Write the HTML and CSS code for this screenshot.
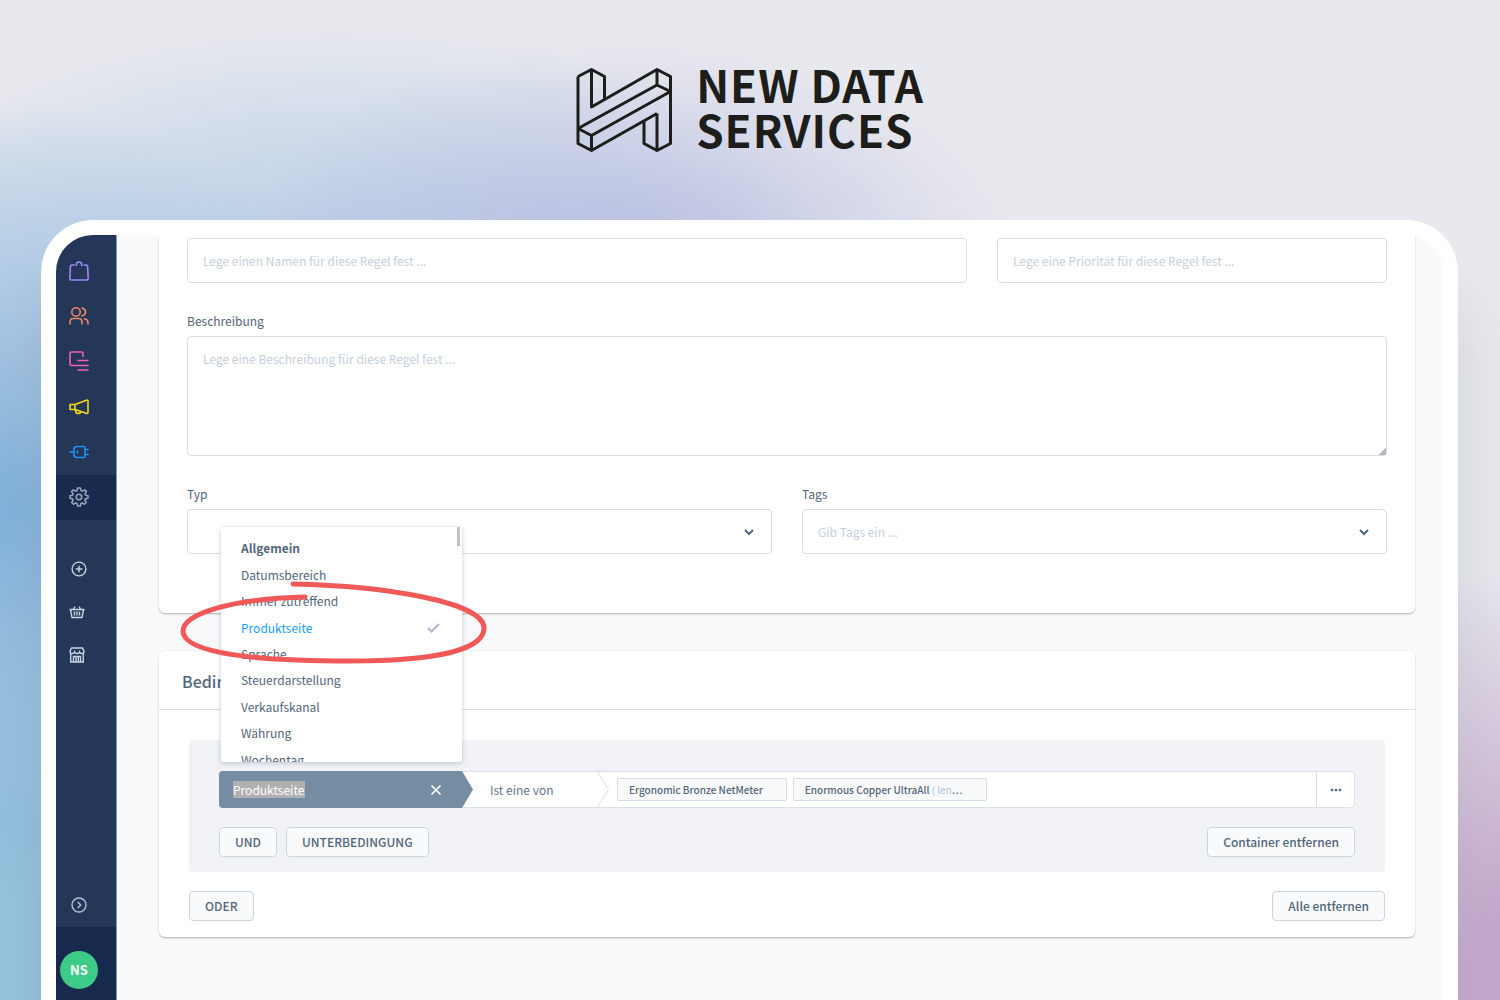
FILE: index.html
```html
<!DOCTYPE html>
<html lang="de">
<head>
<meta charset="utf-8">
<meta name="viewport" content="width=device-width, initial-scale=1">
<title>New Data Services</title>
<link rel="stylesheet" href="styles.css">
</head>
<body>
<header class="brand">
  <svg class="brand-mark" width="96" height="84" viewBox="0 0 96 84" aria-hidden="true">
    <path d="M2 8.500L15.500 1.500L28.500 8.500V31.500M15.500 1.500V39L81 1.500L94.500 8.500V75.500L81 82.500L68 75.500V53.500M2 8.500V75.500L15.500 82.500L81 45.500M94.500 23.500L81 17V1.500M81 17L2 60.500L15.500 67.500V82.500M15.500 67.500L94.500 23.500M81 82.500V45.500"/>
  </svg>
  <span class="brand-name">NEW DATA<br>SERVICES</span>
</header>
<div class="frame">
  <nav class="sidebar" aria-label="Hauptmenü">
    <div class="nav-main">
      <a href="#" class="nav-link violet" aria-label="Kataloge"><svg width="20" height="20" viewBox="0 0 20 20"><path d="M5 4H3Q1.500 4 1.400 5.500L0.800 17.500Q0.800 19 2.300 19H17.700Q19.200 19 19.200 17.500L18.600 5.500Q18.500 4 17 4H15M7.300 4.500V3.500Q7.300 1 10 1T12.700 3.500V4.500"/></svg></a>
      <a href="#" class="nav-link orange" aria-label="Kunden"><svg width="20" height="20" viewBox="0 0 20 20"><circle cx="7" cy="6" r="4.200"/><path d="M1 18V16Q1 12.500 4.500 12.500H9.500Q13 12.500 13 16V18M13 2Q16.500 3 16.500 6T13 10M15.500 12.700Q19 13.500 19 16.500V18"/></svg></a>
      <a href="#" class="nav-link pink" aria-label="Inhalte"><svg width="20" height="20" viewBox="0 0 20 20"><path d="M5.500 14.500H2.500Q1 14.500 1 13V2.500Q1 1 2.500 1H12.500Q14 1 14 2.500V5.500M9 9.500H19M6.500 14.500H19M9 19H19"/></svg></a>
      <a href="#" class="nav-link yellow" aria-label="Marketing"><svg width="20" height="20" viewBox="0 0 20 20"><path d="M1 7.500H6L18 3Q19 3 19 4V15.500Q19 16.500 18 16.500L6 12.500H1ZM6 7.500V12.500M6.500 13Q6.500 16.500 9 16.500T12 14.500"/></svg></a>
      <a href="#" class="nav-link blue" aria-label="Erweiterungen"><svg width="20" height="20" viewBox="0 0 20 20"><path d="M1 10H5M5 7Q5 4.500 8 4.500H14.500Q16 4.500 16 6V14Q16 15.500 14.500 15.500H8Q5 15.500 5 13ZM8.500 9V11M16 7.500H19M16 12.500H19"/></svg></a>
      <a href="#" class="nav-link active" aria-label="Einstellungen"><svg width="20" height="20" viewBox="0 0 20 20"><circle cx="10" cy="10" r="2.700"/><path d="M8.600 1H11.400L12 3.600L13.500 4.200L15.700 2.800L17.500 4.600L16 6.700L16.600 8.200L19 8.700V11.300L16.500 11.900L15.900 13.400L17.300 15.500L15.500 17.300L13.300 15.900L11.900 16.500L11.400 19H8.600L8 16.500L6.600 15.900L4.500 17.300L2.700 15.500L4 13.400L3.500 11.900L1 11.300V8.700L3.500 8.200L4 6.700L2.600 4.600L4.400 2.800L6.600 4.200L8 3.600Z"/></svg></a>
    </div>
    <div class="nav-extra">
      <a href="#" class="nav-small" aria-label="Hinzufügen"><svg width="16" height="16" viewBox="0 0 16 16"><circle cx="8" cy="8" r="6.900"/><path d="M8 4.700V11.300M4.700 8H11.300"/></svg></a>
      <a href="#" class="nav-small shop" aria-label="Warenkorb"><svg width="16" height="14" viewBox="0 0 16 14"><path d="M0.500 4.500H15.500M1.500 4.500L3 12.500H13L14.500 4.500M4.500 4L6 1.500M11.500 4L10 1.500M5.500 6.500V10.500M8 6.500V10.500M10.500 6.500V10.500"/></svg></a>
      <a href="#" class="nav-small shop" aria-label="Storefront"><svg width="16" height="16" viewBox="0 0 16 16"><path d="M2.500 1H13.500L15 4.500Q15 6.500 13 6.500T10.500 5Q10 6.500 8 6.500T5.500 5Q5 6.500 3 6.500T1 4.500ZM1.700 6.500V15H14.300V6.500M4.500 15V9.500H11.500V15M7 9.500V15M9.300 9.500V15"/></svg></a>
    </div>
    <button class="nav-toggle" type="button" aria-label="Menü ausklappen"><svg width="16" height="16" viewBox="0 0 16 16"><circle cx="8" cy="8" r="7"/><path d="M6.700 5L9.700 8L6.700 11"/></svg></button>
    <div class="nav-user"><span class="avatar">NS</span></div>
  </nav>
  <main class="content">
    <form class="card general">
      <div class="row name-row">
        <input class="field" type="text" aria-label="Name" placeholder="Lege einen Namen für diese Regel fest ...">
        <input class="field" type="text" aria-label="Priorität" placeholder="Lege eine Priorität für diese Regel fest ...">
      </div>
      <div class="group">
        <label for="description">Beschreibung</label>
        <textarea class="field area" id="description" placeholder="Lege eine Beschreibung für diese Regel fest ..."></textarea>
      </div>
      <div class="row half-row">
        <div class="group">
          <label for="type">Typ</label>
          <div class="select-box">
            <select class="field" id="type"><option></option></select>
            <svg class="chevron" width="10" height="6" viewBox="0 0 10 6" aria-hidden="true"><path d="M1 1L5 5L9 1"/></svg>
          </div>
        </div>
        <div class="group">
          <label for="tags">Tags</label>
          <div class="select-box">
            <input class="field" id="tags" type="text" placeholder="Gib Tags ein ...">
            <svg class="chevron" width="10" height="6" viewBox="0 0 10 6" aria-hidden="true"><path d="M1 1L5 5L9 1"/></svg>
          </div>
        </div>
      </div>
    </form>
    <section class="card conditions">
      <h2 class="card-title">Bedingungen</h2>
      <div class="card-body">
        <div class="container">
          <div class="condition">
            <div class="cond-type">
              <input class="cond-input" type="text" value="Produktseite" aria-label="Bedingung">
              <button class="clear" type="button" aria-label="Leeren"><svg width="10" height="10" viewBox="0 0 10 10"><path d="M0.500 0.500L9.500 9.500M9.500 0.500L0.500 9.500"/></svg></button>
              <svg class="cond-arrow" width="12" height="37" viewBox="0 0 12 37" aria-hidden="true"><path d="M0 0L11 18.500L0 37Z"/></svg>
              <div class="menu">
                <ul class="options">
                  <li class="heading">Allgemein</li>
                  <li>Datumsbereich</li>
                  <li>Immer zutreffend</li>
                  <li class="chosen">Produktseite<svg width="13" height="10" viewBox="0 0 13 10" aria-hidden="true"><path d="M1 5L4.500 8.500L12 1"/></svg></li>
                  <li>Sprache</li>
                  <li>Steuerdarstellung</li>
                  <li>Verkaufskanal</li>
                  <li>Währung</li>
                  <li>Wochentag</li>
                </ul>
                <span class="thumb"></span>
              </div>
              <svg class="marker" width="308" height="84" viewBox="0 0 308 84" aria-hidden="true"><path d="M113 5C205 7 304 23 304 49C304 72 250 82 170 82C80 82 3 75 3 52C3 35 50 20 125 18"/></svg>
            </div>
            <div class="cond-operator">Ist eine von</div>
            <svg class="divider" width="12" height="35" viewBox="0 0 12 35" aria-hidden="true"><path d="M0.500 0L11.500 17.500L0.500 35"/></svg>
            <div class="cond-values">
              <span class="chip">Ergonomic Bronze NetMeter</span>
              <span class="chip">Enormous Copper UltraAll <span class="dim">( len</span>…</span>
            </div>
            <button class="more" type="button" aria-label="Mehr"><svg width="12" height="4" viewBox="0 0 12 4"><circle cx="2" cy="2" r="1.300"/><circle cx="6" cy="2" r="1.300"/><circle cx="10" cy="2" r="1.300"/></svg></button>
          </div>
          <div class="actions">
            <button class="btn" type="button">UND</button>
            <button class="btn" type="button">UNTERBEDINGUNG</button>
            <button class="btn last" type="button">Container entfernen</button>
          </div>
        </div>
        <div class="actions">
          <button class="btn" type="button">ODER</button>
          <button class="btn last" type="button">Alle entfernen</button>
        </div>
      </div>
    </section>
  </main>
</div>
</body>
</html>
```
FILE: styles.css
```css
* { box-sizing: border-box; }

body {
  margin: 0;
  height: 100vh;
  overflow: hidden;
  display: flex;
  flex-direction: column;
  font: 12px/20px "Noto Sans CJK SC", "Noto Sans", sans-serif;
  color: #52667a;
  background:
    radial-gradient(ellipse 26% 22% at 42% 26%, rgba(178, 184, 224, 0.85), rgba(178, 184, 224, 0) 100%),
    radial-gradient(ellipse 34% 27% at 22% 29%, rgba(160, 192, 226, 0.8), rgba(160, 192, 226, 0) 100%),
    radial-gradient(ellipse 30% 40% at -2% 50%, #84b4dc 10%, rgba(140, 184, 220, 0) 100%),
    radial-gradient(ellipse 24% 60% at 0% 100%, #97c4de 30%, rgba(151, 196, 222, 0) 100%),
    radial-gradient(ellipse 22% 42% at 103% 98%, #c5a9cc 20%, rgba(197, 169, 204, 0) 100%),
    #e8e9ee;
}

a { color: inherit; }
svg { display: block; fill: none; stroke: currentColor; overflow: visible; }
button, input, select, textarea { font: inherit; color: inherit; }
button { cursor: pointer; }

.brand {
  display: flex;
  justify-content: center;
  gap: 24px;
  height: 220px;
  padding-top: 68px;
  flex: none;
  color: #1d1e1b;
}
.brand-mark { stroke-width: 3; stroke-linejoin: round; }
.brand-name { font-size: 44px; line-height: 45px; font-weight: 700; letter-spacing: 1px; margin-top: -6px; }

.frame {
  flex: 1;
  display: flex;
  margin: 0 42px 0 41px;
  border: 15px solid #fff;
  border-bottom: 0;
  border-radius: 52px 52px 0 0;
  background: #f9fafc;
  box-shadow: 0 70px 60px rgba(60, 70, 90, 0.14);
  overflow: hidden;
  min-height: 0;
}

.sidebar {
  width: 61px;
  flex: none;
  display: flex;
  flex-direction: column;
  padding-top: 13px;
  background: #253758;
  border-right: 1px solid #8a97ac;
}
.nav-main { display: flex; flex-direction: column; height: 272px; flex: none; }
.nav-link { flex: 1; display: flex; align-items: center; padding-left: 13px; }
.nav-link svg { stroke-width: 1.600; stroke-linejoin: round; stroke-linecap: round; }
.violet { color: #9d8cf0; }
.orange { color: #ee8663; }
.pink { color: #f35fb1; }
.yellow { color: #f6d71b; }
.blue { color: #2196f3; }
.active { color: #94a3b8; background: #182b4e; }
.nav-extra { display: flex; flex-direction: column; gap: 28px; padding: 41px 0 0 15px; color: #c8d3e4; }
.nav-small svg { stroke-width: 1.400; }
.shop { margin-left: -2px; }
.nav-toggle { margin-top: auto; border: 0; background: none; color: #b4c1d6; padding: 0 0 14px 15px; }
.nav-toggle svg { stroke-width: 1.400; }
.nav-user { flex: none; height: 73px; background: #172a4d; padding: 24px 0 0 4px; }
.avatar {
  display: block;
  width: 38px;
  height: 38px;
  border-radius: 50%;
  background: #3ccb88;
  color: #fff;
  font-size: 13px;
  font-weight: 700;
  line-height: 38px;
  text-align: center;
}

.content { flex: 1; min-width: 0; padding: 0 28px 0 42px; }
.card {
  background: #fff;
  border-radius: 6px;
  box-shadow: 0 1px 1px rgba(0, 0, 0, 0.16), 0 2px 2px rgba(0, 0, 0, 0.08), 0 0 3px rgba(90, 110, 140, 0.1);
}
.general { border-radius: 0 0 6px 6px; padding: 3px 28px 59px; }
.row { display: grid; gap: 30px; }
.name-row { grid-template-columns: 2fr 1fr; }
.half-row { grid-template-columns: 1fr 1fr; }
.group { padding-top: 28px; }
.group label { display: block; height: 25px; }
.field {
  display: block;
  width: 100%;
  height: 45px;
  margin: 0;
  padding: 0 15px;
  border: 1px solid #d5dde6;
  border-radius: 4px;
  background: #fff;
  outline: 0;
  appearance: none;
}
.field::placeholder { color: #c5d0dc; opacity: 1; }
.area { height: 120px; padding-top: 12px; resize: vertical; }
.area::-webkit-resizer { background: linear-gradient(135deg, transparent 75%, #b5b8bc 75%); }
.select-box { display: flex; align-items: center; }
.chevron { flex: none; margin-left: -28px; margin-right: 18px; stroke-width: 2; }

.conditions { margin-top: 38px; }
.card-title {
  margin: 0;
  height: 59px;
  padding: 0 23px;
  border-bottom: 1px solid #d8dde5;
  font-size: 16px;
  line-height: 60px;
  font-weight: 500;
}
.card-body { padding: 30px 30px 16px; }
.container { padding: 31px 30px 15px; border-radius: 4px; background: #f0f2f6; }
.container + .actions { margin-top: 19px; }

.condition {
  display: flex;
  align-items: center;
  height: 37px;
  background: #fff;
  border: 1px solid #d9e0e8;
  border-radius: 4px;
}
.cond-type {
  position: relative;
  width: 243px;
  height: 37px;
  flex: none;
  margin-left: -1px;
  display: flex;
  align-items: center;
  padding: 0 16px 0 14px;
  border-radius: 4px 0 0 4px;
  background: #758ca3;
  color: #fff;
}
.cond-input { width: 72px; height: 17px; padding: 0; border: 0; background: #b0b0b0; outline: 0; }
.clear { margin-left: auto; padding: 5px; border: 0; background: none; }
.clear svg { stroke-width: 1.700; }
.cond-arrow { position: absolute; left: 100%; top: 0; fill: #758ca3; stroke: none; }
.cond-operator { width: 135px; padding-left: 28px; color: #64788e; }
.divider { flex: none; color: #d9e0e8; }
.cond-values { flex: 1; display: flex; gap: 6px; padding-left: 8px; }
.chip {
  height: 23px;
  padding: 0 23px 0 11px;
  border: 1px solid #d5dde6;
  border-radius: 2px;
  background: #f9fafc;
  font-size: 10px;
  font-weight: 500;
  line-height: 22px;
  white-space: nowrap;
}
.dim { color: #b0bfd0; font-weight: 400; }
.more {
  width: 38px;
  height: 35px;
  display: flex;
  align-items: center;
  justify-content: center;
  border: 0;
  border-left: 1px solid #d5dde6;
  background: none;
}
.more svg { fill: currentColor; stroke: none; }

.menu {
  position: absolute;
  z-index: 2;
  left: 2px;
  bottom: 46px;
  width: 241px;
  height: 235px;
  overflow: hidden;
  background: #fff;
  border-radius: 3px;
  box-shadow: 0 1px 5px rgba(60, 80, 110, 0.3);
  color: #52667a;
}
.options {
  list-style: none;
  margin: 8px 0 0;
  padding: 0 20px;
  height: 238px;
  display: grid;
  grid-auto-rows: 1fr;
  align-items: center;
}
.heading { font-weight: 700; }
.chosen { display: flex; align-items: center; justify-content: space-between; color: #189eff; }
.chosen svg { color: #aab6cb; stroke-width: 2; margin-right: 2px; }
.thumb { position: absolute; top: 0; right: 2px; width: 3px; height: 19px; background: #c1c1c1; }
.marker { position: absolute; z-index: 3; left: -39px; bottom: 145px; color: #f15858; stroke-width: 5; stroke-linecap: round; }

.actions { display: flex; gap: 9px; }
.condition + .actions { margin-top: 19px; }
.btn {
  height: 30px;
  padding: 0 15px;
  border: 1px solid #ccd5df;
  border-radius: 4px;
  background: #f9fafc;
  font-weight: 500;
  line-height: 28px;
}
.last { margin-left: auto; }
```
